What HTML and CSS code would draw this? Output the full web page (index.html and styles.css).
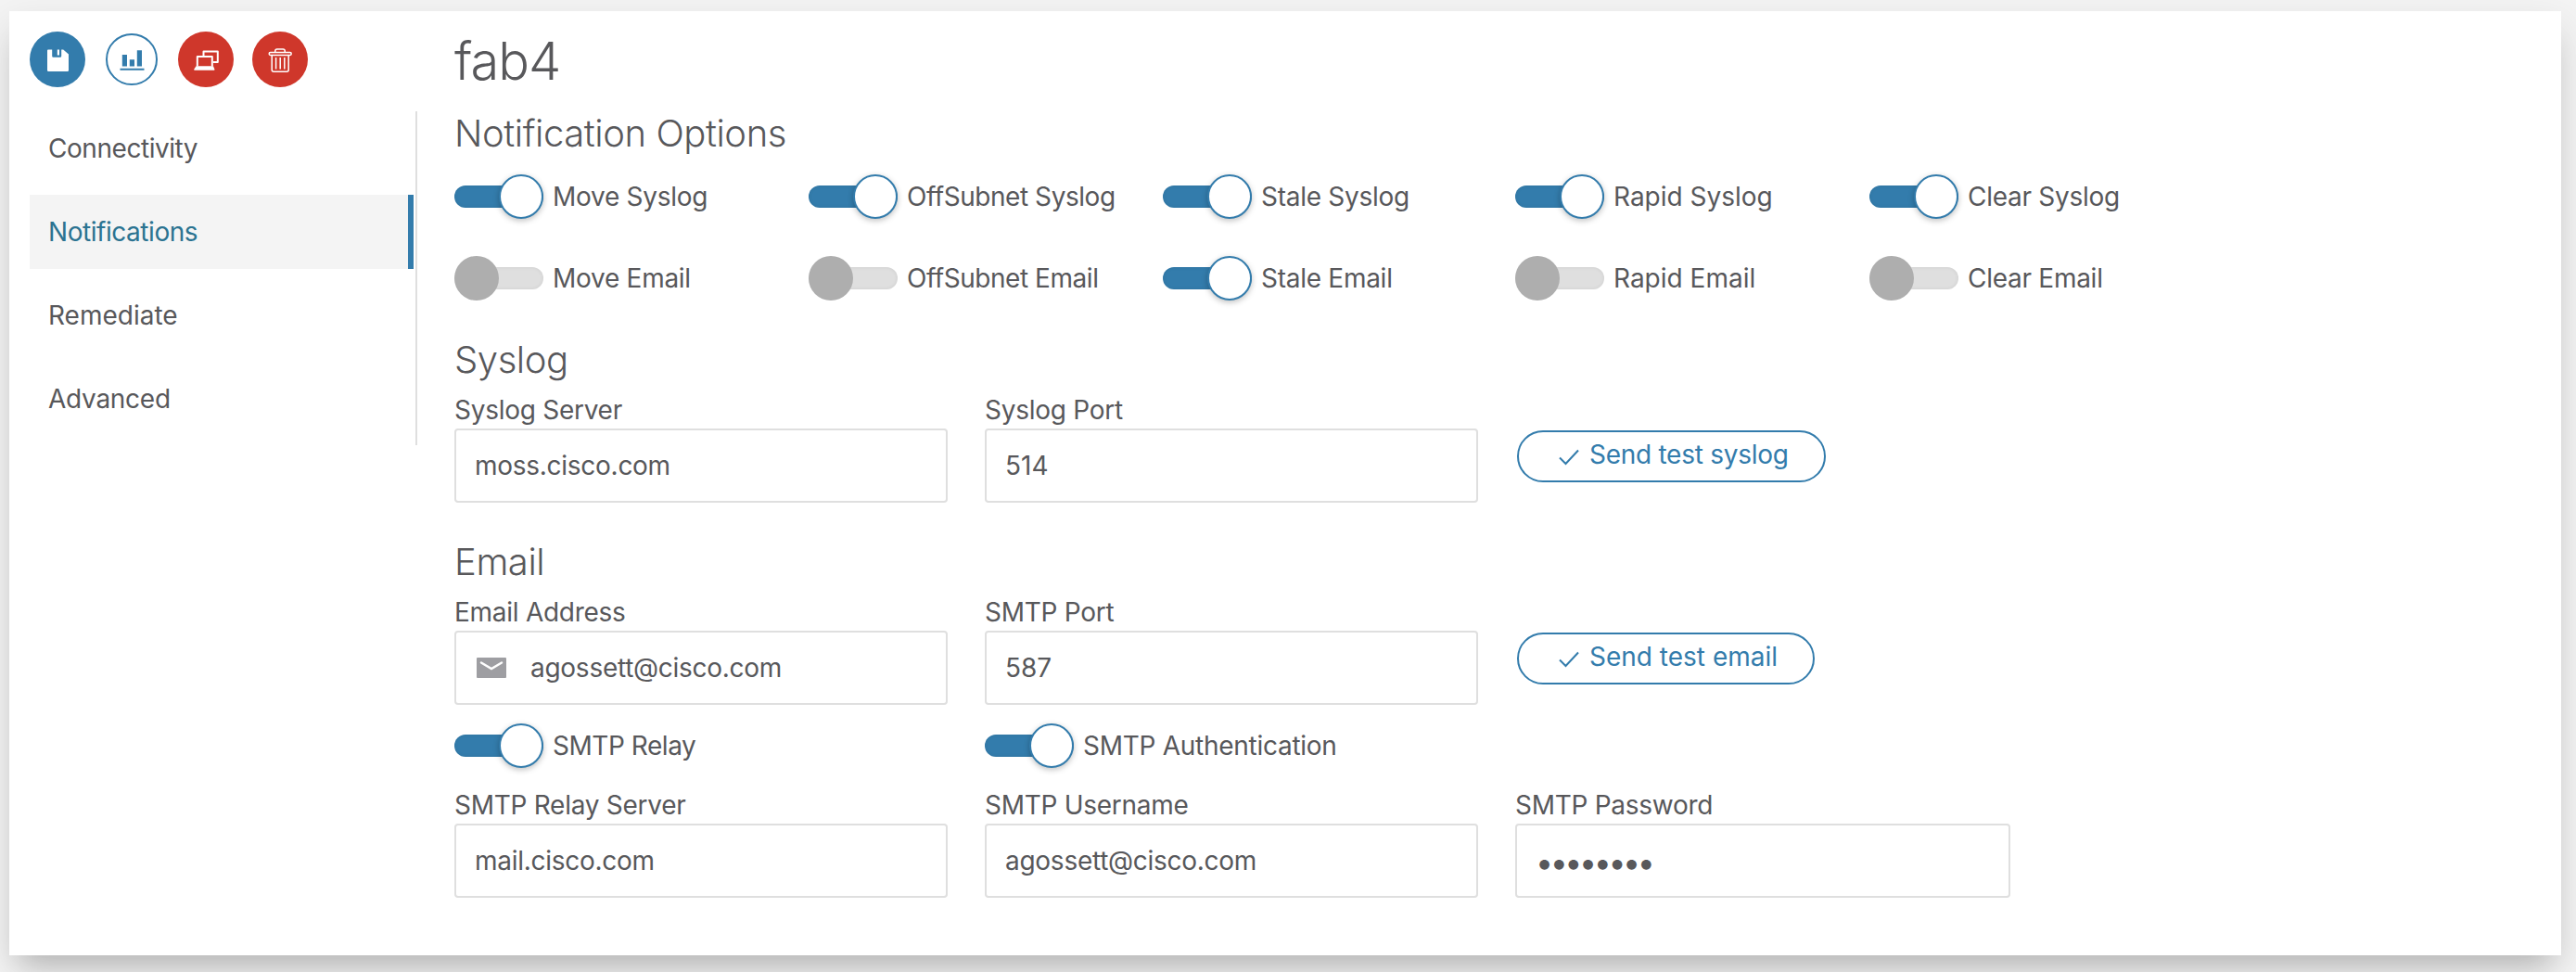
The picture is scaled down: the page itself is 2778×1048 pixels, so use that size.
FILE: index.html
```html
<!DOCTYPE html>
<html lang="en">
<head>
<meta charset="utf-8">
<title>fab4</title>
<link rel="stylesheet" href="styles.css">
</head>
<body>
<div class="card">
  <aside class="side">
    <div class="actions">
      <button class="circle blue" aria-label="Save"><svg width="60" height="60" viewBox="0 0 60 60"><path fill="#fff" d="M20 19.5h4.2v7a1.2 1.2 0 0 0 1.2 1.2h7.6a1.2 1.2 0 0 0 1.2-1.2v-7h2L42 24.600v17.200a1.200 1.200 0 0 1-1.200 1.200H20.200a1.200 1.200 0 0 1-1.200-1.200V20.500a1 1 0 0 1 1-1zM29.800 19.500h2.200v6h-2.200z"/></svg></button>
      <button class="circle outline" aria-label="Statistics"><svg width="60" height="60" viewBox="0 0 60 60"><path fill="#337cac" d="M19.800 25H25v12.500h-5.200zM27.800 30.300H33v7.200h-5.200zM35.800 20.300H41v17.200h-5.200zM17.500 39.800h26v2h-26z"/></svg></button>
      <button class="circle red" aria-label="Sessions"><svg width="60" height="60" viewBox="0 0 60 60" fill="none" stroke="#fff" stroke-width="2" stroke-linejoin="round"><path d="M27.500 26v-4.500h15.300V33h-5"/><path d="M20.800 37.500V27h16v10.500"/><path fill="#fff" stroke="none" d="M19.500 37.200h18.500l1.300 3.200v1.400H17.400v-1.400z"/></svg></button>
      <button class="circle red" aria-label="Delete"><svg width="60" height="60" viewBox="0 0 60 60" fill="none" stroke="#fff" stroke-width="1.500"><path d="M24.800 22.600v-1.600q0-2 2-2h6.400q2 0 2 2v1.600"/><rect x="18.200" y="22.600" width="24" height="2.800" rx="1.400"/><path d="M21.200 25.400v15.800q0 2 2 2h14q2 0 2-2V25.400M25.600 28v12.500M30.200 28v12.500M34.800 28v12.500"/></svg></button>
    </div>
    <nav class="nav">
      <a class="nav-item tight">Connectivity</a>
      <a class="nav-item tight active">Notifications</a>
      <a class="nav-item loose">Remediate</a>
      <a class="nav-item">Advanced</a>
    </nav>
  </aside>
  <main class="main">
    <h1>fab4</h1>
    <h2 class="h-options">Notification Options</h2>
    <div class="options">
      <label class="toggle on"><i></i><span>Move Syslog</span></label>
      <label class="toggle on tight"><i></i><span>OffSubnet Syslog</span></label>
      <label class="toggle on"><i></i><span>Stale Syslog</span></label>
      <label class="toggle on loose"><i></i><span>Rapid Syslog</span></label>
      <label class="toggle on"><i></i><span>Clear Syslog</span></label>
      <label class="toggle"><i></i><span>Move Email</span></label>
      <label class="toggle tight"><i></i><span>OffSubnet Email</span></label>
      <label class="toggle on"><i></i><span>Stale Email</span></label>
      <label class="toggle loose"><i></i><span>Rapid Email</span></label>
      <label class="toggle"><i></i><span>Clear Email</span></label>
    </div>
    <h2 class="h-syslog">Syslog</h2>
    <div class="fields">
      <div class="field"><label>Syslog Server</label><div class="input">moss.cisco.com</div></div>
      <div class="field"><label>Syslog Port</label><div class="input loose">514</div></div>
      <button class="pill"><svg width="24" height="20" viewBox="0 0 24 20"><path d="M2 10.500l6.500 6.500L22 2.500" fill="none" stroke="#337cac" stroke-width="2"/></svg><span>Send test syslog</span></button>
    </div>
    <h2 class="h-email">Email</h2>
    <div class="fields">
      <div class="field"><label>Email Address</label><div class="input"><svg class="mail" width="32" height="22" viewBox="0 0 32 22"><rect width="32" height="22" rx="1" fill="#9e9ea2"/><path d="M5 5.500l11 6.500 11-6.500" fill="none" stroke="#fff" stroke-width="2.500" stroke-linecap="round"/></svg><span>agossett@cisco.com</span></div></div>
      <div class="field"><label>SMTP Port</label><div class="input loose">587</div></div>
      <button class="pill loose"><svg width="24" height="20" viewBox="0 0 24 20"><path d="M2 10.500l6.500 6.500L22 2.500" fill="none" stroke="#337cac" stroke-width="2"/></svg><span>Send test email</span></button>
    </div>
    <div class="fields switches">
      <label class="toggle on tight"><i></i><span>SMTP Relay</span></label>
      <label class="toggle on"><i></i><span>SMTP Authentication</span></label>
    </div>
    <div class="fields">
      <div class="field"><label>SMTP Relay Server</label><div class="input">mail.cisco.com</div></div>
      <div class="field"><label>SMTP Username</label><div class="input">agossett@cisco.com</div></div>
      <div class="field"><label>SMTP Password</label><div class="input password"><span>••••••••</span></div></div>
    </div>
  </main>
</div>
</body>
</html>
```
FILE: styles.css
```css
*, *::before { box-sizing: border-box; }

body {
  margin: 0;
  height: 1048px;
  overflow: hidden;
  padding: 12px 16px 18px 10px;
  background: #f4f4f4;
  color: #58585b;
  font: 400 28px/40px Inter, "Liberation Sans", sans-serif;
  letter-spacing: -.27px;
}

.card {
  display: flex;
  height: 1018px;
  background: #fff;
  box-shadow: 0 22px 30px -14px rgba(0, 0, 0, .2), 0 16px 40px 3px rgba(0, 0, 0, .1);
}

button { font: inherit; letter-spacing: inherit; margin: 0; padding: 0; border: 0; background: none; }
svg { display: block; flex: none; }
.tight { letter-spacing: -.45px; }
.loose { letter-spacing: 0; }

.side { width: 440px; padding: 22px 0 0 22px; }
.actions { display: flex; gap: 20px; height: 60px; }
.circle { display: flex; align-items: center; justify-content: center; width: 60px; height: 60px; border-radius: 50%; }
.circle.blue { background: #337cac; }
.circle.red { background: #cf372b; }
.circle.outline { width: 56px; height: 56px; margin: 2px; border: 2px solid #337cac; background: #fff; }

.nav { display: flex; flex-direction: column; gap: 10px; margin-top: 26px; height: 360px; border-right: 2px solid #dfdfdf; }
.nav-item { display: block; height: 80px; margin-right: 2px; padding: 20px; border-right: 6px solid transparent; }
.nav-item.active { background: #f4f4f4; border-color: #337cac; color: #2b7391; }

.main { width: 2289px; padding: 22px 0 0 40px; }
h1, h2 { margin: 0; font-weight: 300; }
h1 { font-size: 56px; line-height: 64px; letter-spacing: -1px; }
h2 { font-size: 40px; line-height: 48px; letter-spacing: -.43px; }
.h-options { margin-top: 22px; }
.h-syslog { margin-top: 40px; }
.h-email { margin-top: 40px; }

.options { display: grid; grid-template-columns: 382px 382px 380px 382px 382px; row-gap: 40px; margin-top: 20px; }
.toggle { display: flex; align-items: center; height: 48px; white-space: nowrap; }
.toggle i { display: flex; align-items: center; width: 96px; height: 24px; margin-right: 10px; border-radius: 12px; background: #dfdfdf; box-shadow: inset 0 0 4px rgba(0, 0, 0, .08); }
.toggle i::before { content: ""; flex: none; width: 48px; height: 48px; border-radius: 50%; background: #aeaeae; }
.toggle.on i { justify-content: flex-end; background: #337cac; }
.toggle.on i::before { border: 2px solid #337cac; background: #fff; box-shadow: 0 2px 6px rgba(0, 0, 0, .25); }

.fields { display: grid; grid-template-columns: 532px 532px 534px; column-gap: 40px; margin-top: 10px; }
.fields.switches { margin-top: 20px; margin-bottom: 20px; }
.switches + .fields { margin-top: 0; }
.field label { display: block; }
.input { display: flex; align-items: center; height: 80px; padding: 0 20px; border: 2px solid #dfdfdf; border-radius: 4px; }
.mail { margin: 0 26px 0 2px; }
.input.password { padding-top: 3px; }
.password span { font-size: 34px; letter-spacing: -3.45px; }
.pill { display: flex; align-items: center; justify-self: start; height: 56px; margin: 42px 0 0 2px; padding: 0 38px 4px 42px; border: 2px solid #337cac; border-radius: 28px; color: #337cac; white-space: nowrap; }
.pill svg { margin: 5px 10px 0 0; }
```
